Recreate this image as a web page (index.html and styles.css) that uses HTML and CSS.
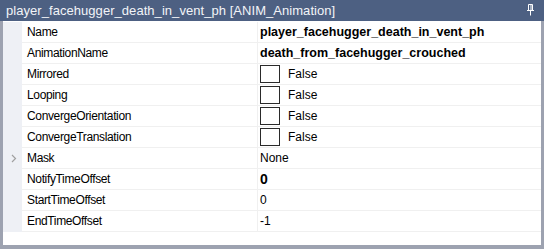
FILE: index.html
```html
<!DOCTYPE html>
<html>
<head>
    <title>Properties</title>
    <link rel="stylesheet" href="styles.css">
</head>
<body>
    <div class="panel">
        <div class="titlebar">
            <span class="title">player_facehugger_death_in_vent_ph [ANIM_Animation]</span>
            <svg class="pin" width="9" height="12" viewBox="0 0 9 12">
                <path d="M2.5 0.5h4v6h-4z M1 6.5h7 M4.5 6.5v5" fill="none" stroke="#fff" stroke-width="1"/>
                <path d="M5 1v5" stroke="#fff" stroke-width="1"/>
            </svg>
        </div>
        <div class="grid">
            <div class="row">
                <div class="gutter"></div>
                <div class="name">Name</div>
                <div class="value bold">player_facehugger_death_in_vent_ph</div>
            </div>
            <div class="row">
                <div class="gutter"></div>
                <div class="name">AnimationName</div>
                <div class="value bold">death_from_facehugger_crouched</div>
            </div>
            <div class="row">
                <div class="gutter"></div>
                <div class="name">Mirrored</div>
                <div class="value"><span class="check"></span>False</div>
            </div>
            <div class="row">
                <div class="gutter"></div>
                <div class="name">Looping</div>
                <div class="value"><span class="check"></span>False</div>
            </div>
            <div class="row">
                <div class="gutter"></div>
                <div class="name">ConvergeOrientation</div>
                <div class="value"><span class="check"></span>False</div>
            </div>
            <div class="row">
                <div class="gutter"></div>
                <div class="name">ConvergeTranslation</div>
                <div class="value"><span class="check"></span>False</div>
            </div>
            <div class="row">
                <div class="gutter">
                    <svg class="chevron" width="6" height="9" viewBox="0 0 6 9">
                        <path d="M1 1l3.5 3.5L1 8" fill="none" stroke="#a0a0a0" stroke-width="1.2"/>
                    </svg>
                </div>
                <div class="name">Mask</div>
                <div class="value">None</div>
            </div>
            <div class="row">
                <div class="gutter"></div>
                <div class="name">NotifyTimeOffset</div>
                <div class="value bold big">0</div>
            </div>
            <div class="row">
                <div class="gutter"></div>
                <div class="name">StartTimeOffset</div>
                <div class="value">0</div>
            </div>
            <div class="row">
                <div class="gutter"></div>
                <div class="name">EndTimeOffset</div>
                <div class="value">-1</div>
            </div>
        </div>
    </div>
</body>
</html>
```

FILE: styles.css
```css
body {
    margin: 0;
    font-family: "Liberation Sans", Arial, sans-serif;
    background-color: #ffffff;
}

.panel {
    width: 544px;
    height: 249px;
    box-sizing: border-box;
    border-left: 3px solid #9da2b0;
    border-right: 3px solid #9da2b0;
    border-bottom: 4px solid #9da2b0;
    background: #ffffff;
}

.titlebar {
    height: 21px;
    margin: 0 -3px;
    background-color: #4d6082;
    color: #f2f4f8;
    display: flex;
    align-items: center;
    justify-content: space-between;
    padding: 0 9px 0 6px;
    font-size: 13px;
}

.title {
    letter-spacing: 0.05px;
}

.pin {
    margin-top: -2px;
}

.grid {
    padding-top: 1px;
}

.row {
    display: grid;
    grid-template-columns: 19px 236px 1fr;
    height: 21px;
    font-size: 12px;
    color: #000;
}

.gutter {
    background-color: #eef0f5;
    display: flex;
    align-items: center;
    padding-left: 8px;
}

.name {
    display: flex;
    align-items: center;
    padding-left: 5px;
    border-bottom: 1px solid #f0f0f0;
    border-right: 1px solid #f0f0f0;
    letter-spacing: -0.35px;
}

.value {
    display: flex;
    align-items: center;
    padding-left: 2px;
    border-bottom: 1px solid #f0f0f0;
}

.bold {
    font-weight: bold;
    font-size: 12.5px;
}

.big {
    font-size: 14px;
}

.check {
    width: 20px;
    height: 18px;
    border: 1px solid #2a2a2a;
    box-sizing: border-box;
    margin-right: 8px;
    background: #fff;
}
```
